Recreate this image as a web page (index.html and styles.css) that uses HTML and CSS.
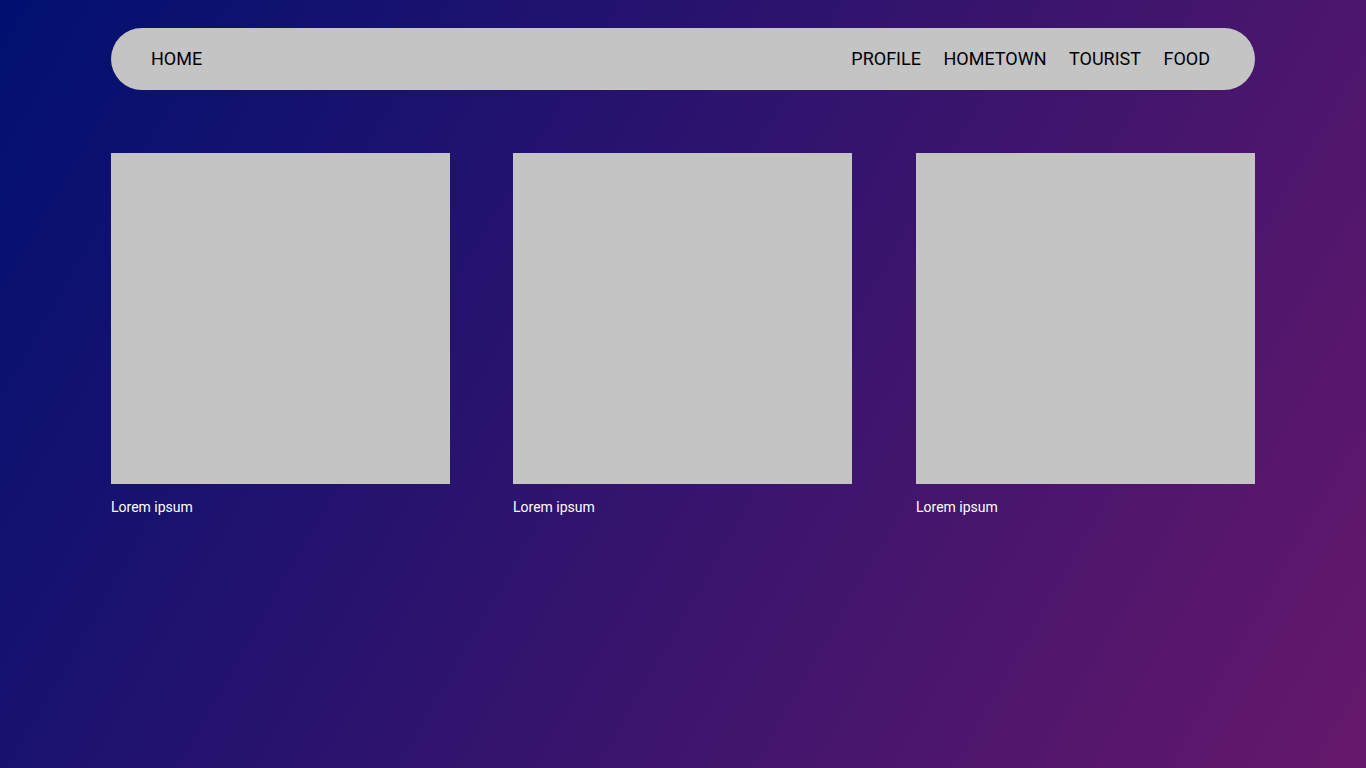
FILE: index.html
```html
<!DOCTYPE html>
<html lang="en">
<head>
<meta charset="utf-8">
<title>Home</title>
<link rel="stylesheet" href="styles.css">
</head>
<body>
<div class="page">
  <nav class="nav">
    <a class="nav-home" href="#">HOME</a>
    <ul class="nav-links">
      <li><a href="#">PROFILE</a></li>
      <li><a href="#">HOMETOWN</a></li>
      <li><a href="#">TOURIST</a></li>
      <li><a href="#">FOOD</a></li>
    </ul>
  </nav>
  <section class="cards">
    <figure class="card"><div class="card-img"></div><figcaption class="card-caption">Lorem ipsum</figcaption></figure>
    <figure class="card"><div class="card-img"></div><figcaption class="card-caption">Lorem ipsum</figcaption></figure>
    <figure class="card"><div class="card-img"></div><figcaption class="card-caption">Lorem ipsum</figcaption></figure>
  </section>
</div>
</body>
</html>
```

FILE: styles.css
```css
* { box-sizing: border-box; }
html, body { margin: 0; padding: 0; height: 100%; }
body {
  background: linear-gradient(120deg, #001070 0%, #65186b 100%);
  font-family: Roboto, "Liberation Sans", sans-serif;
  min-height: 768px;
}
.page {
  width: 1144px;
  margin: 0 auto;
  padding-top: 28px;
}
.nav {
  height: 62px;
  border-radius: 31px;
  background: #c4c4c4;
  display: flex;
  align-items: center;
  justify-content: space-between;
  padding: 0 45px 2px 40px;
}
.nav a {
  color: #000;
  text-decoration: none;
  font-size: 18px;
}
.nav-links {
  list-style: none;
  margin: 0;
  padding: 0;
  display: flex;
  gap: 22.5px;
}
.cards {
  margin-top: 63px;
  display: grid;
  grid-template-columns: 339px 1fr 339px;
  column-gap: 63px;
}
.card { margin: 0; }
.card-img {
  width: 339px;
  height: 331px;
  background: #c4c4c4;
}
.card-caption {
  margin-top: 15px;
  font-size: 14px;
  line-height: 16px;
  color: #fff;
}
```
